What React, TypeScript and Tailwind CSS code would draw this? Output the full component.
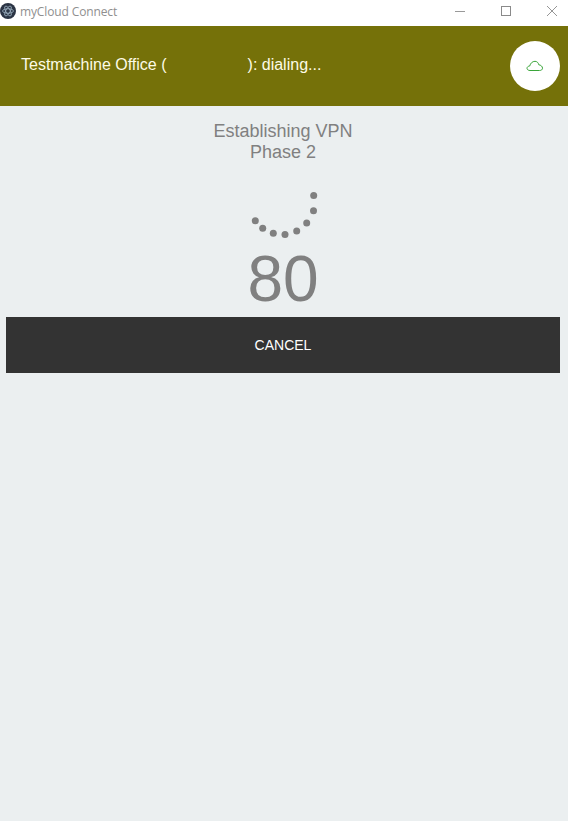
const dots = [
  [313.7, 195.5],
  [313.5, 210.7],
  [306.7, 223],
  [296.7, 231],
  [285, 234.5],
  [273.3, 233.3],
  [262.7, 228.3],
  [255.3, 220.7],
];

const TitleBar = () => (
  <div className="flex h-[26px] items-center justify-between bg-white">
    <div className="flex items-center">
      <svg width="16" height="16" viewBox="0 0 16 16" className="-mt-[4px]">
        <circle cx="8" cy="8" r="8" fill="#2b3444" />
        <g fill="none" stroke="#9fb4c4" strokeWidth="0.8">
          <ellipse cx="8" cy="8" rx="5.5" ry="2.2" />
          <ellipse cx="8" cy="8" rx="5.5" ry="2.2" transform="rotate(60 8 8)" />
          <ellipse cx="8" cy="8" rx="5.5" ry="2.2" transform="rotate(120 8 8)" />
        </g>
      </svg>
      <span className="ml-[4px] -mt-[3px] font-['Open_Sans',sans-serif] text-[12px] tracking-[-0.13px] text-[#8f8f8f]">myCloud Connect</span>
    </div>
    <div className="flex items-center">
      <svg width="12" height="12" viewBox="0 0 12 12" className="mr-[34px] -mt-[4px]">
        <path d="M1 6.5H11" stroke="#999" strokeWidth="1" />
      </svg>
      <svg width="12" height="12" viewBox="0 0 12 12" className="mr-[34px] -mt-[4px]">
        <rect x="1.5" y="1.5" width="9" height="9" fill="none" stroke="#8a8a8a" strokeWidth="1" />
      </svg>
      <svg width="12" height="12" viewBox="0 0 12 12" className="mr-[10px] -mt-[4px]">
        <path d="M1 1L11 11M11 1L1 11" stroke="#8a8a8a" strokeWidth="0.9" />
      </svg>
    </div>
  </div>
);

export default function App() {
  return (
    <div className="flex min-h-[821px] flex-col bg-[#ebeff0] font-['Liberation_Sans',sans-serif]">
      <TitleBar />
      {/* Status header */}
      <div className="flex h-[80px] items-center justify-between bg-[#757109] pl-[21px] pr-[8px]">
        <span className="-mt-[2px] flex text-[16px] text-[#fdfbe6]">
          <span>Testmachine Office (</span>
          <span className="w-[81px]" />
          <span>): dialing...</span>
        </span>
        <div className="flex h-[50px] w-[50px] items-center justify-center rounded-full bg-white">
          <svg width="18" height="12" viewBox="0 0 18 12" fill="none" stroke="#3aa53a" strokeWidth="1">
            <path d="M4 10.5C2.3 10.5 1 9.6 1 8.3C1 7 2.2 6.1 3.7 6C4.4 3.3 6.4 1.3 9 1.3C11 1.3 12.4 2.8 12.8 4.8C14.8 5 16.5 6.4 16.5 8.2C16.5 9.6 15.3 10.5 13.5 10.5Z" />
          </svg>
        </div>
      </div>
      {/* Progress */}
      <div className="flex flex-col pl-[6px] pr-[8px]">
        <div className="mt-[15px] text-center text-[18px] leading-[21px] text-[#808080]">
          <div>Establishing VPN</div>
          <div>Phase 2</div>
        </div>
        <svg width="554" height="60" viewBox="6 185 554 60" className="mt-[22px]">
          {dots.map(([cx, cy]) => (
            <circle key={cx} cx={cx} cy={cy} r="3.5" fill="#808080" />
          ))}
        </svg>
        <div className="-mt-[3px] h-[75px] text-center text-[64px] leading-[75px] text-[#808080]">80</div>
        <button className="h-[56px] bg-[#333333] text-[14px] text-white">CANCEL</button>
      </div>
    </div>
  );
}
